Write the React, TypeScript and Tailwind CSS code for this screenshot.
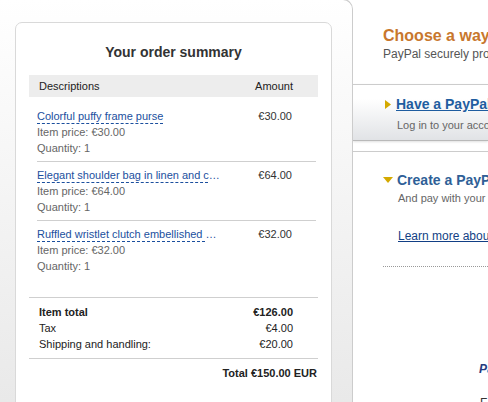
import React from 'react';

const items = [
  { name: 'Colorful puffy frame purse', price: '€30.00', qty: 1 },
  { name: 'Elegant shoulder bag in linen and cotton with leather trim', price: '€64.00', qty: 1 },
  { name: 'Ruffled wristlet clutch embellished with beads', price: '€32.00', qty: 1 },
];

const totals = [
  { label: 'Item total', value: '€126.00', bold: true },
  { label: 'Tax', value: '€4.00', bold: false },
  { label: 'Shipping and handling:', value: '€20.00', bold: false },
];

const OrderSummary: React.FC = () => (
  <div className="w-[353px] shrink-0 -mt-px h-[403px] border-t border-r border-[#cccccc] rounded-tr-[10px] bg-linear-to-b from-white to-[#e9e9e9] pt-[22px] pl-[15px] overflow-hidden">
    <div className="w-[317px] h-[420px] border border-[#d9d9d9] rounded-[7px] bg-white px-[13px] pt-[20px]">
      <h2 className="text-center text-[14px] leading-[18px] font-bold text-[#333]">Your order summary</h2>

      <div className="mt-[14px] h-[22px] bg-[#ededed] flex items-center justify-between pl-[10px] pr-[25px] text-[11px] text-[#222]">
        <span>Descriptions</span>
        <span>Amount</span>
      </div>

      <div className="mt-[6px]">
        {items.map((item, idx) => (
          <div
            key={idx}
            className={`ml-[8px] mr-[2px] pt-[5px] pb-[5px] flex justify-between pr-[24px] text-[11px] leading-[16px] ${
              idx < items.length - 1 ? 'border-b border-[#cfcfcf]' : ''
            }`}
          >
            <div className="text-[#666]">
              <a className="block w-[184px] truncate text-[#1b4f9e] underline decoration-dashed underline-offset-[3px]">
                {item.name}
              </a>
              <div>Item price: {item.price}</div>
              <div>Quantity: {item.qty}</div>
            </div>
            <div className="text-[#333]">{item.price}</div>
          </div>
        ))}
      </div>

      <div className="mt-[18px] border-t border-b border-[#cfcfcf] pt-[6px] pb-[6px] pl-[10px] pr-[25px] text-[11px] leading-[16px] text-[#222]">
        {totals.map((t) => (
          <div key={t.label} className={`flex justify-between ${t.bold ? 'font-bold' : ''}`}>
            <span>{t.label}</span>
            <span>{t.value}</span>
          </div>
        ))}
      </div>

      <div className="pt-[6px] pr-px text-right text-[11px] leading-[16px] font-bold text-[#222]">
        Total €150.00 EUR
      </div>
    </div>
  </div>
);

const PaymentOptions: React.FC = () => (
  <div className="flex-1 min-w-0 overflow-hidden whitespace-nowrap">
    <div className="pl-[30px] pt-[26px] pb-[22px]">
      <h1 className="text-[16px] leading-[20px] font-bold text-[#c8772d]">Choose a way to pay</h1>
      <p className="text-[12px] leading-[16px] text-[#555]">PayPal securely processes payments for Fashion Store.</p>
    </div>

    <div className="border-t border-[#cccccc] border-b border-b-[#b9b9b9] bg-linear-to-b from-white from-[25%] to-[#e1e3e6] pt-[10px] pb-[8px] shadow-[0_1px_2px_rgba(0,0,0,0.12)]">
      <div className="flex items-center pl-[32px] gap-[5px]">
        <svg className="shrink-0" width="6" height="9" viewBox="0 0 6 9">
          <path d="M0 0 L6 4.5 L0 9 Z" fill="#d4a900" />
        </svg>
        <a className="shrink-0 text-[14px] leading-[18px] font-bold text-[#1f5da0] underline">Have a PayPal account?</a>
      </div>
      <p className="mt-[5px] pl-[44px] text-[11px] leading-[14px] text-[#666]">Log in to your account to pay</p>
    </div>

    <div className="mt-[10px] border-t border-[#cccccc] pt-[19px]">
      <div className="flex items-center pl-[30px] gap-[4px]">
        <svg className="shrink-0" width="10" height="6" viewBox="0 0 10 6">
          <path d="M0 0 L10 0 L5 6 Z" fill="#d4a900" />
        </svg>
        <span className="shrink-0 text-[14px] leading-[18px] font-bold text-[#2f5f97]">Create a PayPal account</span>
      </div>
      <p className="mt-[2px] pl-[45px] text-[11px] leading-[14px] text-[#666]">And pay with your debit or credit card</p>
      <a className="block mt-[23px] pl-[45px] text-[12px] leading-[16px] text-[#123f85] underline">Learn more about PayPal</a>
      <div className="ml-[30px] mt-[22px] border-t border-dotted border-[#999]" />
      <div className="mt-[95px] pl-[126px] text-[12px] leading-[14px] font-bold italic">
        <span className="text-[#253b80]">P</span>
        <span className="text-[#179bd7]">a</span>
      </div>
      <div className="mt-[20px] pl-[127px] text-[12px] leading-[14px] text-[#333]">F</div>
    </div>
  </div>
);

export default function App() {
  return (
    <div className="w-[488px] h-[402px] overflow-hidden flex bg-white font-['Liberation_Sans',Arial,sans-serif]">
      <OrderSummary />
      <PaymentOptions />
    </div>
  );
}
